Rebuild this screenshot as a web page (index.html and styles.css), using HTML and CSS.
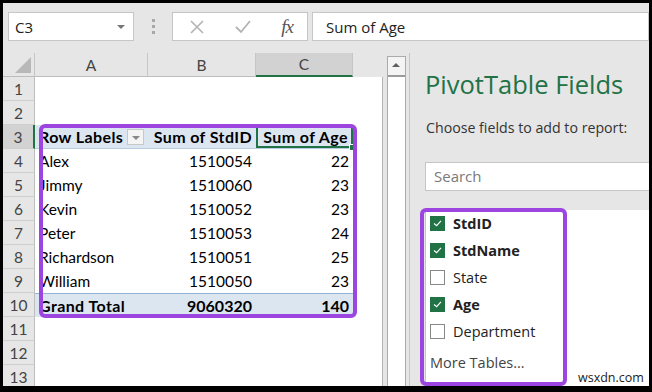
FILE: index.html
```html
<!DOCTYPE html>
<html lang="en">
<head>
    <meta charset="UTF-8">
    <title>PivotTable Fields</title>
    <link rel="stylesheet" href="styles.css">
</head>
<body>
    <div class="app">
        <!-- formula bar -->
        <div class="formula-bar">
            <div class="name-box">
                <span>C3</span>
                <span class="caret"></span>
            </div>
            <div class="grip"><i></i><i></i><i></i></div>
            <div class="fx-box">
                <svg width="16" height="16" viewBox="0 0 16 16"><path d="M2 2 L14 14 M14 2 L2 14" stroke="#b3b3b3" stroke-width="1.6" fill="none"/></svg>
                <svg width="18" height="16" viewBox="0 0 18 16"><path d="M2 8 L7 13 L16 2" stroke="#b3b3b3" stroke-width="1.8" fill="none"/></svg>
                <span class="fx">fx</span>
            </div>
            <div class="formula-input">Sum of Age</div>
        </div>

        <div class="main">
            <!-- worksheet -->
            <div class="sheet">
                <div class="row heads">
                    <div class="corner"></div>
                    <div class="ch">A</div>
                    <div class="ch">B</div>
                    <div class="ch sel">C</div>
                    <div class="ch-rest"></div>
                </div>
                <div class="row"><div class="rh">1</div><div></div><div></div><div></div><div class="rest"></div></div>
                <div class="row"><div class="rh">2</div><div></div><div></div><div></div><div class="rest"></div></div>
                <div class="row">
                    <div class="rh sel">3</div>
                    <div class="pv-head">Row Labels <span class="filter"></span></div>
                    <div class="pv-head num">Sum of StdID</div>
                    <div class="pv-head num active">Sum of Age</div>
                    <div class="rest"></div>
                </div>
                <div class="row"><div class="rh">4</div><div>Alex</div><div class="num">1510054</div><div class="num">22</div><div class="rest"></div></div>
                <div class="row"><div class="rh">5</div><div>Jimmy</div><div class="num">1510060</div><div class="num">23</div><div class="rest"></div></div>
                <div class="row"><div class="rh">6</div><div>Kevin</div><div class="num">1510052</div><div class="num">23</div><div class="rest"></div></div>
                <div class="row"><div class="rh">7</div><div>Peter</div><div class="num">1510053</div><div class="num">24</div><div class="rest"></div></div>
                <div class="row"><div class="rh">8</div><div>Richardson</div><div class="num">1510051</div><div class="num">25</div><div class="rest"></div></div>
                <div class="row"><div class="rh">9</div><div>William</div><div class="num">1510050</div><div class="num">23</div><div class="rest"></div></div>
                <div class="row">
                    <div class="rh">10</div>
                    <div class="pv-total">Grand Total</div>
                    <div class="pv-total num">9060320</div>
                    <div class="pv-total num">140</div>
                    <div class="rest"></div>
                </div>
                <div class="row"><div class="rh">11</div><div></div><div></div><div></div><div class="rest"></div></div>
                <div class="row"><div class="rh">12</div><div></div><div></div><div></div><div class="rest"></div></div>
                <div class="row"><div class="rh">13</div><div></div><div></div><div></div><div class="rest"></div></div>

                <div class="mark mark-pivot"></div>
            </div>

            <div class="vscroll"><div class="up"></div></div>

            <!-- field list pane -->
            <aside class="pane">
                <h1>PivotTable Fields</h1>
                <p class="hint">Choose fields to add to report:</p>
                <div class="search">Search</div>
                <div class="fields">
                    <div class="field on"><span class="box"></span>StdID</div>
                    <div class="field on"><span class="box"></span>StdName</div>
                    <div class="field"><span class="box"></span>State</div>
                    <div class="field on"><span class="box"></span>Age</div>
                    <div class="field"><span class="box"></span>Department</div>
                    <div class="more">More Tables...</div>
                </div>
                <div class="mark mark-fields"></div>
                <span class="watermark">wsxdn.com</span>
            </aside>
        </div>
    </div>
</body>
</html>
```

FILE: styles.css
```css
body {
    margin: 0;
    background-color: #000;
    font-family: "Open Sans", sans-serif;
}

.app {
    width: 646px;
    height: 383px;
    margin: 3px 3px 6px 3px;
    background-color: #e6e6e6;
    display: flex;
    flex-direction: column;
    overflow: hidden;
}

/* formula bar */
.formula-bar {
    display: flex;
    align-items: center;
    height: 50px;
    padding: 9px 0 12px 5px;
    box-sizing: border-box;
}

.name-box,
.fx-box,
.formula-input {
    height: 29px;
    background-color: #fff;
    border: 1px solid #c6c6c6;
    box-sizing: border-box;
    display: flex;
    align-items: center;
}

.name-box {
    width: 126px;
    padding: 0 8px 0 6px;
    justify-content: space-between;
    font-size: 15px;
    color: #222;
}

.caret {
    width: 0;
    height: 0;
    border-left: 4px solid transparent;
    border-right: 4px solid transparent;
    border-top: 4px solid #777;
}

.grip {
    width: 38px;
    display: flex;
    flex-direction: column;
    align-items: center;
    gap: 3px;
}

.grip i {
    width: 3px;
    height: 3px;
    background-color: #a8a8a8;
}

.fx-box {
    width: 136px;
    padding: 0 14px 0 16px;
    justify-content: space-between;
}

.fx {
    font-family: "Liberation Serif", serif;
    font-style: italic;
    font-size: 19px;
    color: #555;
    letter-spacing: -1px;
}

.formula-input {
    flex: 1;
    margin-left: 4px;
    padding-left: 13px;
    font-size: 15px;
    color: #222;
}

.main {
    flex: 1;
    display: flex;
    min-height: 0;
}

/* worksheet */
.sheet {
    position: relative;
    width: 380px;
    font-family: Lato, sans-serif;
    font-size: 15.5px;
    color: #000;
}

.row {
    display: grid;
    grid-template-columns: 32px 113px 108px 97px 30px;
    height: 24px;
}

.row > div {
    display: flex;
    align-items: center;
    padding: 0 4px;
    box-sizing: border-box;
    white-space: nowrap;
    background-color: #fff;
}

.row > .num {
    justify-content: flex-end;
}

.row > .rh,
.heads > div {
    background-color: #e6e6e6;
    color: #444;
    justify-content: center;
    padding: 0;
}

.row > .rh {
    border-bottom: 1px solid #cfcfcf;
    border-right: 1px solid #bdbdbd;
}

.row > .rh.sel {
    background-color: #d2d2d2;
    border-right: 2px solid #217346;
}

.heads > .ch {
    border-right: 1px solid #c6c6c6;
    border-bottom: 1px solid #bdbdbd;
}

.heads > .ch.sel {
    background-color: #d2d2d2;
    border-bottom: 2px solid #217346;
}

.heads > .ch-rest {
    background-color: #e6e6e6;
}

.corner {
    position: relative;
    border-right: 1px solid #c6c6c6;
    border-bottom: 1px solid #bdbdbd;
}

.corner::after {
    content: "";
    position: absolute;
    right: 3px;
    bottom: 3px;
    border-left: 16px solid transparent;
    border-bottom: 16px solid #b8b8b8;
}

.row > .rest {
    border-right: 1px solid #b4b4b4;
}

.row > .pv-head,
.row > .pv-total {
    background-color: #dce6f1;
    font-weight: bold;
    font-size: 16px;
    letter-spacing: 0.4px;
}

.row > .pv-head {
    border-bottom: 1px solid #b8cce4;
}

.row > .pv-head.active {
    padding-right: 5px;
}

.row > .pv-total {
    border-top: 1px solid #95b3d7;
}

.row > .pv-total.num {
    letter-spacing: 0;
}

.filter {
    margin-left: auto;
    width: 17px;
    height: 16px;
    border: 1px solid #c8c8c8;
    background-color: #f4f4f4;
    box-sizing: border-box;
    position: relative;
}

.filter::after {
    content: "";
    position: absolute;
    left: 4px;
    top: 6px;
    border-left: 4px solid transparent;
    border-right: 4px solid transparent;
    border-top: 4px solid #888;
}

.row > .active {
    position: relative;
    box-shadow: inset 0 0 0 2px #217346;
}

.active::after {
    content: "";
    position: absolute;
    right: -3px;
    bottom: -3px;
    width: 5px;
    height: 5px;
    background-color: #217346;
    border: 1px solid #fff;
}

.mark {
    position: absolute;
    border: 4px solid #9c45e0;
    border-radius: 6px;
    box-sizing: border-box;
}

.mark-pivot {
    left: 36px;
    top: 71px;
    width: 318px;
    height: 194px;
}

/* vertical scrollbar */
.vscroll {
    width: 19px;
    margin: 3px 0 0 4px;
    border: 1px solid #ababab;
    border-bottom: none;
    background-color: #fff;
    box-sizing: border-box;
}

.up {
    height: 18px;
    border-bottom: 2px solid #9a9a9a;
    background-color: #f4f4f4;
    position: relative;
}

.up::after {
    content: "";
    position: absolute;
    left: 4px;
    top: 6px;
    border-left: 4px solid transparent;
    border-right: 4px solid transparent;
    border-bottom: 4px solid #606060;
}

/* field list pane */
.pane {
    position: relative;
    flex: 1;
    margin-left: 3px;
    border-left: 1px solid #c6c6c6;
    padding-left: 15px;
}

.pane h1 {
    margin: 14px 0 0 0;
    font-family: "Open Sans", sans-serif;
    font-weight: 400;
    font-size: 25.5px;
    line-height: 34px;
    color: #217346;
}

.hint {
    margin: 17px 0 0 1px;
    font-size: 14.2px;
    line-height: 20px;
    color: #333;
}

.search {
    height: 29px;
    margin-top: 24px;
    padding-left: 8px;
    background-color: #fff;
    border: 1px solid #c6c6c6;
    border-right: none;
    box-sizing: border-box;
    font-size: 15px;
    line-height: 27px;
    color: #7a7a7a;
}

.fields {
    margin-top: 19px;
    height: 200px;
    background-color: #fff;
    border-left: 1px solid #c6c6c6;
    padding-left: 4px;
}

.field {
    display: flex;
    align-items: center;
    gap: 8px;
    height: 27px;
    font-size: 14.5px;
    color: #222;
}

.field.on {
    font-weight: bold;
}

.box {
    width: 15px;
    height: 15px;
    border: 1px solid #888;
    box-sizing: border-box;
    background-color: #fff;
}

.field.on .box {
    border-color: #217346;
    background: #217346 url("data:image/svg+xml,%3Csvg xmlns='http://www.w3.org/2000/svg' viewBox='0 0 15 15'%3E%3Cpath d='M3.5 7.5 L6.5 10 L11.5 4.5' stroke='white' stroke-width='1.4' fill='none'/%3E%3C/svg%3E") no-repeat center;
}

.more {
    margin-top: 4px;
    height: 27px;
    line-height: 27px;
    font-size: 14.5px;
    color: #444;
}

.mark-fields {
    left: 10px;
    top: 155px;
    width: 147px;
    height: 178px;
}

.watermark {
    position: absolute;
    left: 168px;
    bottom: 0;
    font-size: 12.5px;
    color: #222;
}
```
